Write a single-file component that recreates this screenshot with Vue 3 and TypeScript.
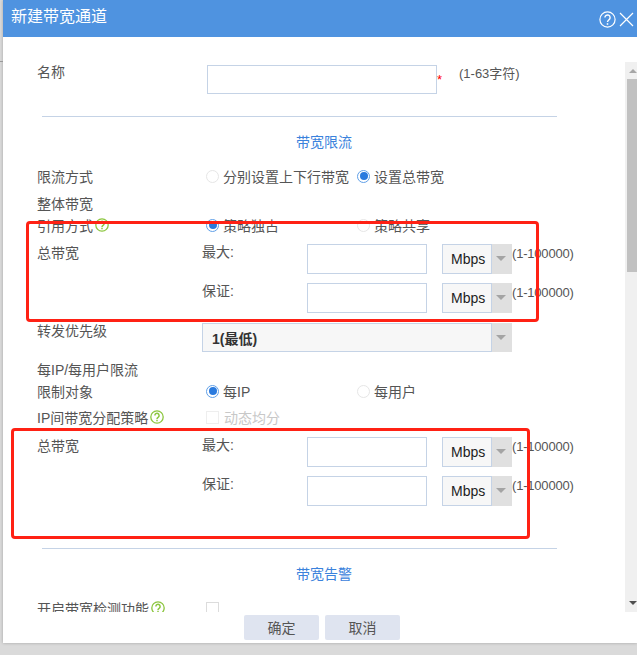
<script setup lang="ts">
const limitRows = ['最大:', '保证:']
</script>

<template>
  <div class="page">
    <span class="behind-line"></span>
    <div class="dialog">
      <header class="head">
        <span class="head-title">新建带宽通道</span>
        <svg class="head-help" width="17" height="17" viewBox="0 0 17 17" fill="none" stroke="#fff">
          <circle cx="8.5" cy="8.5" r="7.6" stroke-width="1.2" />
          <path d="M5.9 6.6a2.6 2.6 0 1 1 4.2 2c-1 .8-1.6 1.2-1.6 2.5" stroke-width="1.4" />
          <path d="M8.5 12.2v1.6" stroke-width="1.5" />
        </svg>
        <svg class="head-close" width="15" height="15" viewBox="0 0 15 15" stroke="#fff" stroke-width="1.2">
          <path d="M1 1l13 13M14 1L1 14" />
        </svg>
      </header>

      <div class="main">
        <div class="content">
          <div class="row name-row">
            <span class="label">名称</span>
            <span class="text-input name-input"></span>
            <span class="star">*</span>
            <span class="hint">(1-63字符)</span>
          </div>

          <div class="divider first-divider"></div>
          <div class="section-title">带宽限流</div>

          <div class="row line">
            <span class="label">限流方式</span>
            <span class="radio-item"><i class="radio"></i>分别设置上下行带宽</span>
            <span class="radio-item"><i class="radio on"></i>设置总带宽</span>
          </div>
          <div class="row line group-head"><span class="label">整体带宽</span></div>
          <div class="row line">
            <span class="label">引用方式<svg class="tip" width="14" height="14" viewBox="0 0 14 14" fill="none" stroke="#8cc63f"><circle cx="7" cy="7" r="6.2" stroke-width="1.3" /><path d="M4.9 5.5a2.1 2.1 0 1 1 3.4 1.6c-.8.6-1.3 1-1.3 2" stroke-width="1.5" /><path d="M7 9.8v1.5" stroke-width="1.5" /></svg></span>
            <span class="radio-item"><i class="radio on"></i>策略独占</span>
            <span class="radio-item"><i class="radio"></i>策略共享</span>
          </div>

          <div class="limits first-limits">
            <span class="label limits-label">总带宽</span>
            <div class="limits-rows">
              <div v-for="name in limitRows" :key="name" class="limit-row">
                <span class="limit-name">{{ name }}</span>
                <span class="text-input limit-input"></span>
                <span class="select unit"><span class="select-value">Mbps</span><span class="select-arrow"></span></span>
                <span class="range">(1-100000)</span>
              </div>
            </div>
          </div>

          <div class="row priority">
            <span class="priority-label">转发优先级</span>
            <span class="select wide"><span class="select-value strong">1(最低)</span><span class="select-arrow"></span></span>
          </div>

          <div class="row line per-ip"><span class="label">每IP/每用户限流</span></div>
          <div class="row line">
            <span class="label">限制对象</span>
            <span class="radio-item"><i class="radio on"></i>每IP</span>
            <span class="radio-item"><i class="radio"></i>每用户</span>
          </div>
          <div class="row line strategy">
            <span class="label">IP间带宽分配策略<svg class="tip" width="14" height="14" viewBox="0 0 14 14" fill="none" stroke="#8cc63f"><circle cx="7" cy="7" r="6.2" stroke-width="1.3" /><path d="M4.9 5.5a2.1 2.1 0 1 1 3.4 1.6c-.8.6-1.3 1-1.3 2" stroke-width="1.5" /><path d="M7 9.8v1.5" stroke-width="1.5" /></svg></span>
            <span class="check-item disabled"><i class="check"></i>动态均分</span>
          </div>

          <div class="limits second-limits">
            <span class="label limits-label">总带宽</span>
            <div class="limits-rows">
              <div v-for="name in limitRows" :key="name" class="limit-row">
                <span class="limit-name">{{ name }}</span>
                <span class="text-input limit-input"></span>
                <span class="select unit"><span class="select-value">Mbps</span><span class="select-arrow"></span></span>
                <span class="range">(1-100000)</span>
              </div>
            </div>
          </div>

          <div class="divider second-divider"></div>
          <div class="section-title">带宽告警</div>

          <div class="row line">
            <span class="label">开启带宽检测功能<svg class="tip" width="14" height="14" viewBox="0 0 14 14" fill="none" stroke="#8cc63f"><circle cx="7" cy="7" r="6.2" stroke-width="1.3" /><path d="M4.9 5.5a2.1 2.1 0 1 1 3.4 1.6c-.8.6-1.3 1-1.3 2" stroke-width="1.5" /><path d="M7 9.8v1.5" stroke-width="1.5" /></svg></span>
            <span class="check-item"><i class="check"></i></span>
          </div>
        </div>

        <div class="scrollbar">
          <span class="arrow-up"></span>
          <span class="thumb"></span>
          <span class="arrow-down"></span>
        </div>
      </div>

      <footer class="foot">
        <span class="btn">确定</span>
        <span class="btn">取消</span>
      </footer>
    </div>

    <div class="mark mark-a"></div>
    <div class="mark mark-b"></div>
  </div>
</template>

<style>
html, body { margin: 0; background: #d9d9d9; }
</style>

<style scoped>
.page {
  position: relative;
  width: 637px;
  height: 655px;
  overflow: hidden;
  background: #dadada;
  font-family: "Liberation Sans", "Noto Sans CJK SC", sans-serif;
  font-size: 14px;
  color: #555;
}
.behind-line {
  position: absolute;
  left: 0;
  top: 61px;
  width: 3px;
  height: 1px;
  background: #9a9a9a;
}
.dialog {
  margin-left: 3px;
  height: 643px;
  background: #fff;
  display: flex;
  flex-direction: column;
  box-shadow: 0 0 3px rgba(0, 0, 0, 0.25);
}
.head {
  height: 37px;
  flex: none;
  background: #4f93e0;
  display: flex;
  align-items: center;
  color: #fff;
  padding-left: 8px;
}
.head-title { font-size: 16px; flex: 1; line-height: 20px; padding-bottom: 3px; }
.head-help { margin-right: 3px; margin-top: 1px; }
.head-close { margin-right: 3px; margin-top: 1px; }
.main {
  height: 575px;
  flex: none;
  display: flex;
  align-items: flex-start;
}
.content {
  width: 622px;
  height: 575px;
  overflow: hidden;
  padding: 28px 0 0 34px;
  box-sizing: border-box;
  flex: none;
}
.row { display: flex; align-items: center; }
.label {
  width: 169px;
  flex: none;
  display: flex;
  align-items: center;
  white-space: nowrap;
}
.tip { margin-left: 2px; flex: none; }
.line { height: 22px; padding-bottom: 2px; box-sizing: border-box; }
.name-row { height: 29px; align-items: flex-start; }
.name-row .label { width: 170px; line-height: 14px; }
.text-input {
  display: block;
  box-sizing: border-box;
  background: #fff;
  border: 1px solid #c5d3e6;
}
.name-input { width: 230px; height: 29px; }
.star { color: #f00; width: 22px; font-size: 13px; line-height: 14px; margin-top: 8px; flex: none; }
.hint { font-size: 13px; line-height: 15px; margin-top: 1px; }
.divider {
  height: 1px;
  width: 515px;
  margin-left: 5px;
  background: #c5d3e6;
}
.first-divider { margin-top: 22px; }
.second-divider { margin-top: 42px; }
.section-title {
  height: 49px;
  line-height: 50px;
  padding-left: 259px;
  color: #3b82dc;
}
.group-head { margin-top: 5px; }
.radio-item {
  width: 151px;
  flex: none;
  display: flex;
  align-items: center;
  white-space: nowrap;
}
.radio {
  width: 13px;
  height: 13px;
  box-sizing: border-box;
  border: 1px solid #e6e6e6;
  border-radius: 50%;
  margin-right: 4px;
  flex: none;
  position: relative;
}
.radio.on { border-color: #5f9fe8; border-width: 1.5px; }
.radio.on::after {
  content: "";
  position: absolute;
  inset: 1.5px;
  border-radius: 50%;
  background: #2a7ade;
}
.check-item { display: flex; align-items: center; white-space: nowrap; }
.check {
  width: 13px;
  height: 13px;
  box-sizing: border-box;
  border: 1px solid #dcdcdc;
  margin-right: 5px;
  flex: none;
}
.disabled { color: #c8c8c8; }
.disabled .check { border-color: #eee; }
.limits { display: flex; align-items: flex-start; }
.limits-label { width: 165px; line-height: 18px; }
.first-limits { margin-top: 7px; height: 69px; }
.second-limits { margin-top: 8px; height: 69px; }
.limits-rows { display: flex; flex-direction: column; gap: 9px; }
.limit-row { display: flex; align-items: flex-start; height: 30px; }
.limit-name { width: 105px; line-height: 17px; }
.limit-input { width: 120px; height: 30px; margin-right: 15px; }
.select {
  display: flex;
  box-sizing: border-box;
  flex: none;
}
.unit { width: 70px; height: 30px; }
.select-value {
  flex: 1;
  box-sizing: border-box;
  border: 1px solid #c5d3e6;
  background: #f7f7f7;
  color: #222;
  display: flex;
  align-items: center;
  padding-left: 8px;
}
.strong { font-weight: 600; padding-left: 9px; color: #333; }
.select-arrow {
  width: 20px;
  flex: none;
  background: #e0e0e0;
  position: relative;
}
.select-arrow::after {
  content: "";
  position: absolute;
  left: 4px;
  top: 50%;
  margin-top: -3px;
  border-left: 5px solid transparent;
  border-right: 5px solid transparent;
  border-top: 5px solid #a4a4a4;
}
.range { font-size: 13px; line-height: 19px; white-space: nowrap; letter-spacing: -0.2px; }
.priority { margin-top: 10px; height: 29px; align-items: flex-start; }
.priority-label { width: 165px; flex: none; line-height: 16px; }
.wide { width: 310px; height: 29px; }
.per-ip { margin-top: 7px; }
.strategy { margin-top: 4px; }
.scrollbar {
  margin-top: 25px;
  width: 12px;
  height: 550px;
  flex: none;
  background: #f0f0f0;
  position: relative;
}
.thumb {
  position: absolute;
  left: 2px;
  right: 0;
  top: 17px;
  height: 193px;
  background: #c1c1c1;
}
.arrow-up, .arrow-down {
  position: absolute;
  left: 4px;
  border-left: 4px solid transparent;
  border-right: 4px solid transparent;
}
.arrow-up { top: 7px; border-bottom: 4px solid #a6a6a6; }
.arrow-down { bottom: 7px; border-top: 4px solid #505050; }
.foot {
  height: 31px;
  flex: none;
  display: flex;
  gap: 6px;
  padding: 3px 0 0 241px;
  box-sizing: border-box;
}
.btn {
  width: 75px;
  height: 25px;
  line-height: 27px;
  text-align: center;
  background: #dfe4f0;
  border-radius: 2px;
}
.mark {
  position: absolute;
  box-sizing: border-box;
  border: 3px solid #ff2114;
  border-radius: 4px;
}
.mark-a { left: 26px; top: 221px; width: 513px; height: 101px; }
.mark-b { left: 11px; top: 428px; width: 519px; height: 111px; }
</style>
